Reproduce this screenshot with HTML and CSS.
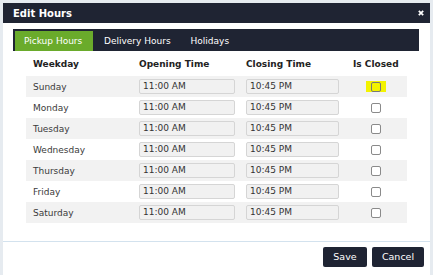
FILE: index.html
```html
<!DOCTYPE html>
<html>
<head>
<meta charset="utf-8">
<link rel="stylesheet" href="styles.css">
</head>
<body>
<div class="modal">
  <div class="modal-header">
    <span class="title">Edit Hours</span>
    <svg class="close" width="6" height="6" viewBox="0 0 6 6"><path d="M0.8 0.8L5.2 5.2M5.2 0.8L0.8 5.2" stroke="#fff" stroke-width="1.7"/></svg>
  </div>
  <div class="modal-body">
    <div class="tabs">
      <div class="tab active">Pickup Hours</div>
      <div class="tab">Delivery Hours</div>
      <div class="tab">Holidays</div>
    </div>
    <div class="table">
      <div class="row head">
        <div class="c1">Weekday</div><div class="c2">Opening Time</div><div class="c3">Closing Time</div><div class="c4">Is Closed</div>
      </div>
      <div class="row odd"><div class="c1">Sunday</div><div class="c2"><span class="inp">11:00 AM</span></div><div class="c3"><span class="inp">10:45 PM</span></div><div class="c4"><span class="hl"><span class="cb"></span></span></div></div>
      <div class="row"><div class="c1">Monday</div><div class="c2"><span class="inp">11:00 AM</span></div><div class="c3"><span class="inp">10:45 PM</span></div><div class="c4"><span class="cb"></span></div></div>
      <div class="row odd"><div class="c1">Tuesday</div><div class="c2"><span class="inp">11:00 AM</span></div><div class="c3"><span class="inp">10:45 PM</span></div><div class="c4"><span class="cb"></span></div></div>
      <div class="row"><div class="c1">Wednesday</div><div class="c2"><span class="inp">11:00 AM</span></div><div class="c3"><span class="inp">10:45 PM</span></div><div class="c4"><span class="cb"></span></div></div>
      <div class="row odd"><div class="c1">Thursday</div><div class="c2"><span class="inp">11:00 AM</span></div><div class="c3"><span class="inp">10:45 PM</span></div><div class="c4"><span class="cb"></span></div></div>
      <div class="row"><div class="c1">Friday</div><div class="c2"><span class="inp">11:00 AM</span></div><div class="c3"><span class="inp">10:45 PM</span></div><div class="c4"><span class="cb"></span></div></div>
      <div class="row odd"><div class="c1">Saturday</div><div class="c2"><span class="inp">11:00 AM</span></div><div class="c3"><span class="inp">10:45 PM</span></div><div class="c4"><span class="cb"></span></div></div>
    </div>
  </div>
  <div class="modal-footer">
    <div class="btn save">Save</div>
    <div class="btn cancel">Cancel</div>
  </div>
</div>
</body>
</html>
```

FILE: styles.css
```css
html, body {
  margin: 0;
  padding: 0;
  height: 100%;
  overflow: hidden;
}
body {
  background: #e6ebf0;
  font-family: "DejaVu Sans", Verdana, sans-serif;
  font-size: 9px;
  color: #3a3a3a;
}
.modal {
  margin: 3px 3px 0 3px;
  width: 427px;
  height: 272px;
  background: #fff;
  display: flex;
  flex-direction: column;
}
.modal-header {
  height: 20px;
  background: #1f2433;
  display: flex;
  align-items: center;
  justify-content: space-between;
  padding: 0 6px 0 10px;
}
.title {
  color: #fff;
  font-weight: bold;
  font-size: 10px;
}
.close {
  display: block;
}
.modal-body {
  padding: 6px 11px 0 10px;
}
.tabs {
  height: 20px;
  background: #1f2433;
  padding: 2px 0 0 2px;
  display: flex;
}
.tab {
  color: #fff;
  line-height: 20px;
  padding: 0 9px 0 9px;
  margin-right: 2px;
}
.tab.active {
  background: #6aab2b;
  width: 60px;
}
.table {
  margin: 0 12px 0 13px;
}
.row {
  display: grid;
  grid-template-columns: 113px 107px 107px 54px;
  height: 21px;
  align-items: center;
}
.row.head {
  height: 25px;
  font-weight: bold;
  color: #222;
}
.row.odd {
  background: #f2f2f2;
}
.c1 {
  padding-left: 7px;
}
.inp {
  display: block;
  box-sizing: border-box;
  height: 15px;
  line-height: 13px;
  border: 1px solid #d5d5d5;
  border-radius: 2px;
  background: #f1f1f1;
  padding-left: 3px;
  color: #333;
}
.c2 .inp { width: 96px; }
.c3 .inp { width: 93px; }
.c4 {
  display: flex;
  align-items: center;
}
.cb {
  display: block;
  box-sizing: border-box;
  width: 10px;
  height: 10px;
  border: 1px solid #8a8a8a;
  border-radius: 2px;
  background: #fff;
  margin-left: 18px;
}
.hl {
  display: flex;
  align-items: center;
  justify-content: center;
  width: 20px;
  height: 11px;
  background: #f3f300;
  margin-left: 13px;
}
.hl .cb {
  margin-left: 0;
  background: #f3f300;
  border-color: #777;
}
.modal-footer {
  margin-top: 18px;
  border-top: 1px solid #d3e2ee;
  display: flex;
  justify-content: flex-end;
  padding: 5px 6px 0 0;
  gap: 5px;
}
.btn {
  background: #1f2433;
  color: #fff;
  font-size: 9.5px;
  height: 20px;
  line-height: 20px;
  text-align: center;
  border-radius: 2px;
}
.btn.save { width: 44px; }
.btn.cancel { width: 52px; }
```
